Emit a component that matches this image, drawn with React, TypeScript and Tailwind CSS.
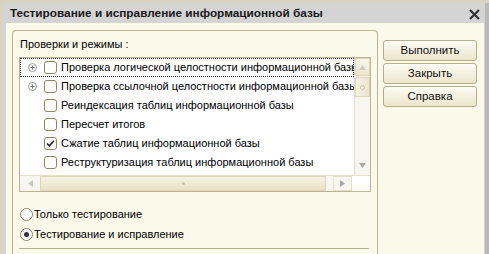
import React from 'react'

const rows = [
  { text: 'Проверка логической целостности информационной базы', expand: true, checked: false, focus: true },
  { text: 'Проверка ссылочной целостности информационной базы', expand: true, checked: false },
  { text: 'Реиндексация таблиц информационной базы', expand: false, checked: false },
  { text: 'Пересчет итогов', expand: false, checked: false },
  { text: 'Сжатие таблиц информационной базы', expand: false, checked: true },
  { text: 'Реструктуризация таблиц информационной базы', expand: false, checked: false },
]

function ExpandIcon() {
  return (
    <svg width="9" height="9" viewBox="0 0 9 9">
      <circle cx="4.5" cy="4.5" r="4" fill="#fbfbf8" stroke="#9a9a9a" strokeWidth="1" />
      <path d="M2.5 4.5h4M4.5 2.5v4" stroke="#7a7a7a" strokeWidth="1" />
    </svg>
  )
}

function Checkbox({ checked }: { checked: boolean }) {
  return (
    <div className="w-[13px] h-[13px] rounded-[3px] border border-[#8f8868] bg-white flex items-center justify-center shrink-0">
      {checked && (
        <svg width="9" height="9" viewBox="0 0 9 9">
          <path d="M1 4.5l2.3 2.3L8 1.8" fill="none" stroke="#222" strokeWidth="1.6" />
        </svg>
      )}
    </div>
  )
}

function Radio({ checked, label }: { checked: boolean; label: string }) {
  return (
    <div className="flex items-center h-[20px]">
      <div className="w-[13px] h-[13px] rounded-full border border-[#8f8868] bg-white flex items-center justify-center">
        {checked && <div className="w-[5px] h-[5px] rounded-full bg-[#333]" />}
      </div>
      <span className="ml-[1px]">{label}</span>
    </div>
  )
}

function Button({ label }: { label: string }) {
  return (
    <div className="h-[21px] rounded-[3px] border border-[#b8af8a] bg-gradient-to-b from-[#fdfcf6] to-[#ebe5cb] flex items-center justify-center text-[11.5px] text-[#111]">
      {label}
    </div>
  )
}

export default function App() {
  return (
    <div
      className="w-[489px] h-[254px] bg-[#d9d4bf] pl-[3px] pt-[3px] overflow-hidden flex text-[11px] text-black"
      style={{ fontFamily: '"Liberation Sans", Arial, sans-serif' }}
    >
      <div className="flex-1 flex flex-col bg-[#d4d4d4] border-r-[4px] border-[#b9b9b9]">
        {/* Title bar */}
        <div className="h-[19px] shrink-0 flex items-center justify-between pl-[7px] pr-[5px] pt-[3px]">
          <span className="font-bold text-[11.8px] text-[#1a1a1a]">Тестирование и исправление информационной базы</span>
          <svg width="11" height="11" viewBox="0 0 11 11">
            <path d="M1 1l9 9M10 1l-9 9" stroke="#333" strokeWidth="2.2" />
          </svg>
        </div>

        {/* Body */}
        <div className="flex-1 bg-[#fbf9ea] ml-[3px] mr-[1px] mt-[1px] flex pl-[6px] pt-[7px]">
          {/* Group */}
          <div className="w-[366px] border border-b-0 border-[#bcb592] rounded-t-[4px] flex flex-col pl-[6px]">
            <div className="h-[26px] flex items-center pl-[1px] pt-[1px]">Проверки и режимы :</div>

            {/* List box */}
            <div className="w-[352px] h-[135px] border border-[#bcb592] bg-white flex flex-col">
              <div className="flex flex-1 min-h-0">
                <div className="flex-1 flex flex-col overflow-hidden">
                  {rows.map((r, i) => (
                    <div
                      key={i}
                      className={
                        'h-[19px] shrink-0 flex items-center pl-[7px] whitespace-nowrap ' +
                        (r.focus ? 'border border-dotted border-[#333]' : 'border border-transparent')
                      }
                    >
                      <div className="w-[9px] shrink-0 flex items-center">{r.expand && <ExpandIcon />}</div>
                      <div className="ml-[7px]">
                        <Checkbox checked={r.checked} />
                      </div>
                      <span className="ml-[4px]">{r.text}</span>
                    </div>
                  ))}
                </div>
                {/* Vertical scrollbar */}
                <div className="w-[16px] shrink-0 bg-[#f8f6ee] flex flex-col border-l border-[#e4dfc8]">
                  <div className="h-[18px] border border-[#ddd6b8] bg-gradient-to-b from-[#faf8ee] to-[#ece6ce] flex items-center justify-center">
                    <svg width="7" height="5" viewBox="0 0 7 5">
                      <path d="M3.5 0L7 5H0z" fill="#c8c8c8" />
                    </svg>
                  </div>
                  <div className="h-[20px] mt-[1px] border border-[#ddd6b8] bg-gradient-to-r from-[#f6f3e4] to-[#ebe5cc] flex items-center justify-center">
                    <div className="w-[5px] h-[5px] rounded-full border border-[#c9c3a8]" />
                  </div>
                  <div className="flex-1" />
                  <div className="h-[18px] flex items-center justify-center mb-[1px]">
                    <svg width="7" height="5" viewBox="0 0 7 5">
                      <path d="M0 0h7L3.5 5z" fill="#a8a8a8" />
                    </svg>
                  </div>
                </div>
              </div>
              {/* Horizontal scrollbar */}
              <div className="h-[16px] shrink-0 flex border-t border-[#e4dfc8] bg-[#f8f6ee]">
                <div className="w-[20px] flex items-center justify-center">
                  <svg width="5" height="7" viewBox="0 0 5 7">
                    <path d="M0 3.5L5 0v7z" fill="#c8c8c8" />
                  </svg>
                </div>
                <div className="w-[286px] border border-[#ddd6b8] bg-gradient-to-b from-[#f6f3e4] to-[#e8e1c4] flex items-center justify-center">
                  <div className="w-[3px] h-[3px] rounded-full bg-[#c9c3a8]" />
                </div>
                <div className="w-[7px]" />
                <div className="w-[19px] border border-[#e4dfc8] flex items-center justify-center">
                  <svg width="5" height="7" viewBox="0 0 5 7">
                    <path d="M5 3.5L0 0v7z" fill="#a8a8a8" />
                  </svg>
                </div>
                <div className="flex-1 bg-white" />
              </div>
            </div>

            {/* Radios */}
            <div className="mt-[12px] flex flex-col pl-[1px]">
              <Radio checked={false} label="Только тестирование" />
              <Radio checked={true} label="Тестирование и исправление" />
            </div>
            <div className="mt-[4px] w-[350px] h-px bg-[#b5ae8a]" />
          </div>

          {/* Buttons */}
          <div className="w-[94px] ml-[5px] mt-[10px] flex flex-col gap-[2px]">
            <Button label="Выполнить" />
            <Button label="Закрыть" />
            <Button label="Справка" />
          </div>
        </div>
      </div>
    </div>
  )
}
